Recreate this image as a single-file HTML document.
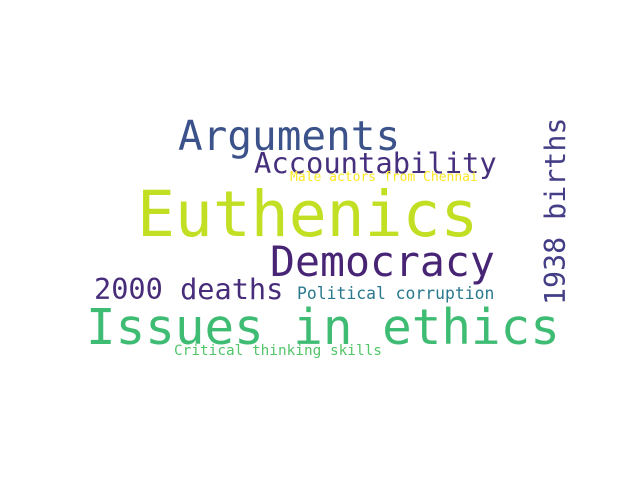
<!DOCTYPE html>
<html><head><meta charset="utf-8"><style>
html,body{margin:0;padding:0;background:#fff;width:640px;height:480px;overflow:hidden;position:relative}
span{position:absolute;font-family:"DejaVu Sans Mono","Liberation Mono",monospace;line-height:1;white-space:nowrap}
</style></head><body>
<span style="left:178px;top:116px;font-size:41px;color:#3b528b">Arguments</span>
<span style="left:254px;top:149px;font-size:28.8px;color:#46307e">Accountability</span>
<span style="left:290px;top:171px;font-size:13px;color:#fde725">Male actors from Chennai</span>
<span style="left:137px;top:183px;font-size:63px;color:#c2df23">Euthenics</span>
<span style="left:270px;top:241px;font-size:41.5px;color:#482475">Democracy</span>
<span style="left:94px;top:275px;font-size:28.6px;color:#472c7a">2000 deaths</span>
<span style="left:297px;top:286px;font-size:16.4px;color:#2a788e">Political corruption</span>
<span style="left:86px;top:303px;font-size:49.2px;color:#3fbc73">Issues in ethics</span>
<span style="left:174px;top:344px;font-size:14.4px;color:#52c569">Critical thinking skills</span>
<span style="left:542px;top:305px;font-size:28.3px;color:#433e85;transform:rotate(-90deg);transform-origin:0 0">1938 births</span>
</body></html>
